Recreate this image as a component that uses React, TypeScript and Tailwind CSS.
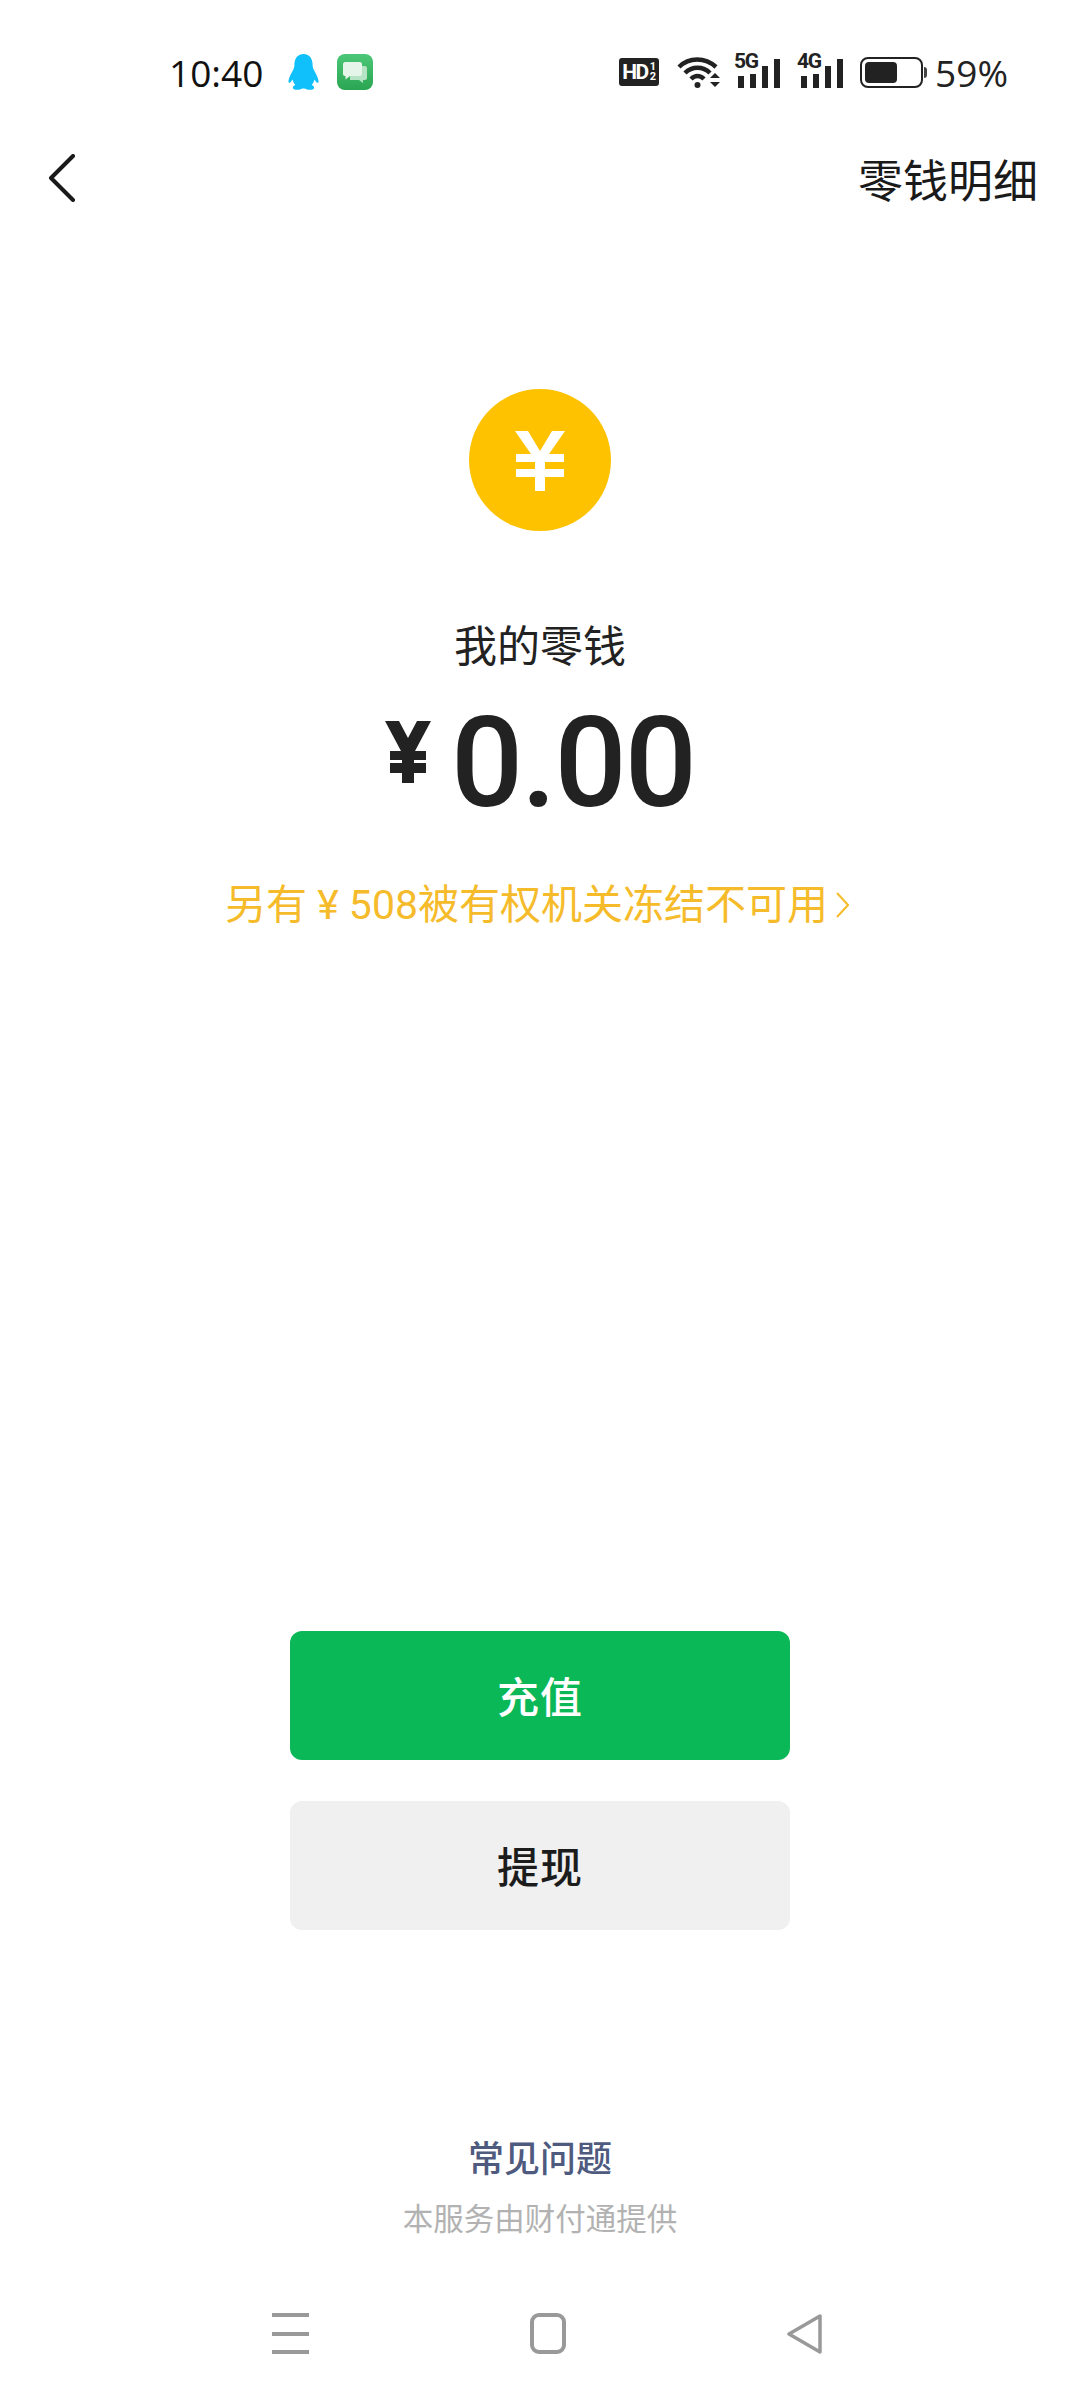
const cjk = "font-['Roboto','Noto_Sans_CJK_SC',sans-serif]";

function QQIcon() {
  return (
    <svg width="31" height="36" viewBox="0 0 34 36" preserveAspectRatio="none" className="ml-[25px]">
      <path
        d="M17 0C10 0 7 5 7 11C7 13 6.500 14.500 5 17C3 20 1 24 0.500 27C0.500 29 1.500 29.500 3 28C4 27 4.500 26 5 25.500C5.500 27.500 6.500 29.500 8 31C5.500 32 5 33 5.500 34.500C6.500 36 10 36 13 35.500C14.500 35 15.500 34.500 17 34.500C18.500 34.500 19.500 35 21 35.500C24 36 27.500 36 28.500 34.500C29 33 28.500 32 26 31C27.500 29.500 28.500 27.500 29 25.500C29.500 26 30 27 31 28C32.500 29.500 33.500 29 33.500 27C33 24 31 20 29 17C27.500 14.500 27 13 27 11C27 5 24 0 17 0Z"
        fill="#0fc0fb"
      />
    </svg>
  );
}

function ChatIcon() {
  return (
    <svg width="36" height="36" viewBox="0 0 36 36" className="ml-[18px]">
      <defs>
        <linearGradient id="chatBg" x1="0" y1="0" x2="0" y2="1">
          <stop offset="0" stopColor="#4cc777" />
          <stop offset="1" stopColor="#2aa552" />
        </linearGradient>
      </defs>
      <rect width="36" height="36" rx="8" fill="url(#chatBg)" />
      <path d="M13 12H28C29 12 30 13 30 14V24C30 25 29 26 28 26H26V29L22 26H13Z" fill="#b5e4c5" />
      <path d="M8 8H23C24 8 25 9 25 10V20C25 21 24 22 23 22H13L8.500 25.500V22H8C7 22 6 21 6 20V10C6 9 7 8 8 8Z" fill="#e6f5ea" />
    </svg>
  );
}

function HdIcon() {
  return (
    <div className="w-[40px] h-[28px] rounded-[3px] bg-[#222] text-white flex items-center justify-center font-['Roboto',sans-serif] font-bold leading-none">
      <span className="text-[21px] tracking-[-1.500px]">HD</span>
      <span className="flex flex-col items-center text-[11px] leading-[10px] ml-[2px]">
        <span>1</span>
        <span>2</span>
      </span>
    </div>
  );
}

function WifiIcon() {
  return (
    <svg width="44" height="32" viewBox="0 0 44 32" className="ml-[18px]" fill="none" stroke="#222" strokeWidth="4.500">
      <path d="M2 11C12 1 28 1 39 11" />
      <path d="M8 17C15 10 26 10 33 17" />
      <path d="M14 23C18 19 23 19 27 23" />
      <circle cx="20.500" cy="29" r="3" fill="#222" stroke="none" />
      <path d="M33 22L38 17L43 22Z" fill="#222" stroke="none" />
      <path d="M33 26L38 31L43 26Z" fill="#222" stroke="none" />
    </svg>
  );
}

function SignalIcon({ label, className }: { label: string; className: string }) {
  return (
    <div className={`relative w-[47px] h-[32px] flex items-end gap-[6px] pl-[4px] ${className}`}>
      <span className="absolute left-0 top-[-5px] text-[21px] leading-[20px] font-bold tracking-[-1.500px] text-[#222] font-['Roboto',sans-serif]">
        {label}
      </span>
      <span className="w-[6px] h-[12px] bg-[#222]" />
      <span className="w-[6px] h-[14px] bg-[#222]" />
      <span className="w-[6px] h-[22px] bg-[#222]" />
      <span className="w-[6px] h-[29px] bg-[#222]" />
    </div>
  );
}

function BatteryIcon() {
  return (
    <div className="flex items-center ml-[16px]">
      <div className="w-[63px] h-[31px] rounded-[8px] border-2 border-[#222] p-[3px]">
        <div className="w-[32px] h-full rounded-[4px] bg-[#222]" />
      </div>
      <div className="w-[3px] h-[11px] bg-[#444] ml-px rounded-r-sm" />
    </div>
  );
}

function StatusBar() {
  return (
    <div className="h-[144px] flex items-center pl-[169px] pr-[72px]">
      <span className="text-[37px] leading-none text-[#111] font-['Open_Sans',sans-serif]">10:40</span>
      <QQIcon />
      <ChatIcon />
      <div className="ml-auto flex items-center">
        <HdIcon />
        <WifiIcon />
        <SignalIcon label="5G" className="ml-[13px]" />
        <SignalIcon label="4G" className="ml-[16px]" />
        <BatteryIcon />
        <span className="ml-[8px] text-[37px] leading-none text-[#222] font-['Open_Sans',sans-serif]">59%</span>
      </div>
    </div>
  );
}

function NavBar() {
  return (
    <div className="h-[70px] flex items-center justify-between pl-[48px] pr-[42px]">
      <svg width="28" height="48" viewBox="0 0 28 48" fill="none" stroke="#1a1a1a" strokeWidth="4" strokeLinecap="round" strokeLinejoin="round" className="mb-[2px]">
        <path d="M25 2L3 24L25 46" />
      </svg>
      <span className={`mt-[6px] text-[45px] leading-none text-[#1a1a1a] ${cjk}`}>零钱明细</span>
    </div>
  );
}

function Balance() {
  return (
    <div className="flex flex-col items-center mt-[175px]">
      <div className="w-[142px] h-[142px] pt-[2px] rounded-full bg-[#fec200] flex items-center justify-center">
        <svg width="50" height="60" viewBox="0 0 50 60" fill="white">
          <path d="M0 0H13L25 20L37 0H50L34 23H49V31H30V38H49V46H30V60H20V46H1V38H20V31H1V23H16Z" />
        </svg>
      </div>
      <div className={`mt-[91px] text-[43px] leading-[50px] text-[#222] ${cjk}`}>我的零钱</div>
      <div className="mt-[32px] flex items-start font-['Roboto',sans-serif] text-[#222]">
        <svg width="46" height="62" viewBox="0 0 46 62" fill="#222" className="mt-[17px] mr-[20px]">
          <path d="M0 0H14L23 17L32 0H46L30 30H41V39H29V42H41V52H29V62H17V52H5V42H17V39H5V30H16Z" />
        </svg>
        <span className="text-[127px] leading-[118px] font-medium tracking-[-2px]">0.00</span>
      </div>
      <div className={`mt-[58px] mr-[6px] flex items-center text-[41px] leading-[50px] text-[#f6bb2a] ${cjk}`}>
        <span>另有 ¥ 508被有权机关冻结不可用</span>
        <svg width="13" height="26" viewBox="0 0 13 26" fill="none" stroke="#f6bb2a" strokeWidth="2" className="ml-[8px]">
          <path d="M1 1L12 13L1 25" />
        </svg>
      </div>
    </div>
  );
}

function Actions() {
  return (
    <div className={`mt-auto flex flex-col items-center gap-[41px] text-[42px] font-medium ${cjk}`}>
      <button className="w-[500px] h-[129px] pt-[6px] rounded-[12px] bg-[#0bb858] text-white tracking-[1px]">充值</button>
      <button className="w-[500px] h-[129px] pt-[6px] rounded-[12px] bg-[#f0f0f0] text-[#1c1c1c] tracking-[1px]">提现</button>
    </div>
  );
}

function Footer() {
  return (
    <div className={`mt-[205px] flex flex-col items-center ${cjk}`}>
      <div className="text-[36px] leading-[50px] font-medium text-[#4f5a7f]">常见问题</div>
      <div className="mt-[15px] text-[30.500px] leading-[40px] text-[#b2b2b2]">本服务由财付通提供</div>
    </div>
  );
}

function SystemNav() {
  return (
    <div className="mt-[73px] h-[87px] flex justify-between items-start pl-[272px] pr-[257px]">
      <div className="w-[37px] h-[41px] flex flex-col justify-between">
        <span className="h-[4px] bg-[#999]" />
        <span className="h-[4px] bg-[#999]" />
        <span className="h-[4px] bg-[#999]" />
      </div>
      <div className="w-[36px] h-[41px] rounded-[9px] border-[4px] border-[#999]" />
      <svg width="36" height="42" viewBox="0 0 36 42" fill="none" stroke="#999" strokeWidth="3.500" strokeLinejoin="round">
        <path d="M33 3V39L2 21Z" />
      </svg>
    </div>
  );
}

export default function App() {
  return (
    <div className="w-[1080px] h-[2400px] bg-white flex flex-col overflow-hidden">
      <StatusBar />
      <NavBar />
      <Balance />
      <Actions />
      <Footer />
      <SystemNav />
    </div>
  );
}
